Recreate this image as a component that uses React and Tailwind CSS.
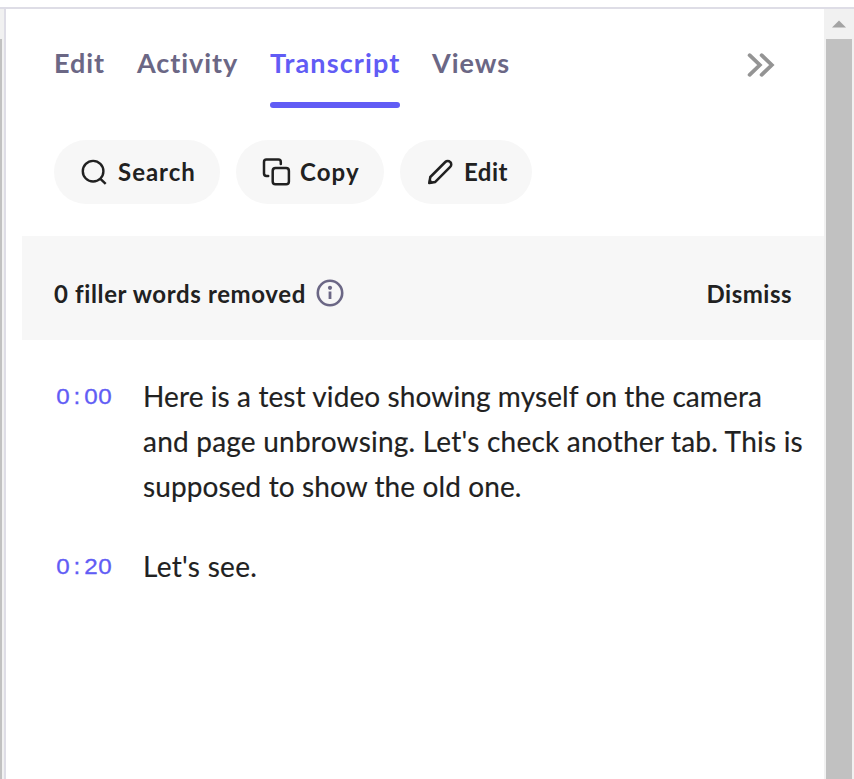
import React from "react";

function Tab({ label, active = false, className = "" }) {
  return (
    <button
      className={`flex h-[66px] flex-col justify-between whitespace-nowrap text-left text-[27px] font-bold leading-[42px] ${
        active ? "text-[#615cf5]" : "text-[#6b6785]"
      } ${className}`}
    >
      <span>{label}</span>
      {active && <span className="block h-[6px] w-full rounded-full bg-[#615cf5]" />}
    </button>
  );
}

function SearchIcon() {
  return (
    <svg className="h-[32px] w-[32px] shrink-0" viewBox="0 0 32 32" fill="none" stroke="#212121" strokeWidth="2.4">
      <circle cx="15.1" cy="15.2" r="10.3" />
      <path d="M22.4 22.8l5.3 5.1" />
    </svg>
  );
}

function CopyIcon() {
  return (
    <svg className="h-[32px] w-[32px] shrink-0" viewBox="0 0 32 32" fill="none" stroke="#212121" strokeWidth="2.5" strokeLinecap="round" strokeLinejoin="round">
      <path d="M8.2 19.9H6.4a2.4 2.4 0 0 1-2.4-2.4V5.9a2.4 2.4 0 0 1 2.4-2.4h12a2.4 2.4 0 0 1 2.4 2.4V8.1" />
      <rect x="12.7" y="12.1" width="16.2" height="16.2" rx="2.8" />
    </svg>
  );
}

function PencilIcon() {
  return (
    <svg className="h-[32px] w-[32px] shrink-0" viewBox="0 0 32 32" fill="none" stroke="#212121" strokeWidth="2.5" strokeLinejoin="round">
      <path d="M5.3 27.1l1-6.1L21.3 6a3.4 3.4 0 0 1 4.9 0a3.4 3.4 0 0 1 0 4.9L11.3 25.9Z" />
      <path d="M4.8 27.6l.7-4.4l3.5 3.4Z" fill="#212121" strokeWidth="1" />
    </svg>
  );
}

function Pill({ icon, label, className, textClass }) {
  return (
    <button className={`flex h-16 items-center whitespace-nowrap rounded-full bg-[#f7f7f7] text-[24px] font-bold text-[#212121] ${className}`}>
      {icon}
      <span className={textClass}>{label}</span>
    </button>
  );
}

function Stamp({ chars }) {
  return (
    <div className="flex h-[45px] w-[89px] shrink-0 items-center pl-[2px] font-['Liberation_Sans',sans-serif] text-[22px] text-[#615cf5] [-webkit-text-stroke:0.3px_#615cf5]">
      {chars.split("").map((c, i) => (
        <span key={i} className="w-[13.9px] scale-x-110 text-center">{c}</span>
      ))}
    </div>
  );
}

export default function App() {
  return (
    <div className="flex h-[779px] w-[854px] flex-col overflow-hidden bg-white font-['Lato',sans-serif]">
      <div className="h-[9px] shrink-0 border-b-2 border-[#dedde6]" />
      <div className="flex min-h-0 flex-1">
        <div className="w-[4px] bg-[#f1f1f1] pt-[30px]">
          <div className="h-full w-[2px] bg-[#c1c1c1]" />
        </div>
        <main className="w-[820px] border-l-2 border-[#dedde6]">
          <nav className="flex h-[131px] items-start pl-[48px] pr-[49px] pt-[33px]">
            <Tab label="Edit" className="w-[83px] tracking-[0.9px]" />
            <Tab label="Activity" className="w-[133px] tracking-[0.95px]" />
            <Tab label="Transcript" active className="w-[130px] tracking-[1.1px]" />
            <Tab label="Views" className="ml-[32px] w-[80px] tracking-[1px]" />
            <svg className="ml-auto mt-[10px] h-[26px] w-[28px]" viewBox="0 0 28 26" fill="none" stroke="#949494" strokeWidth="3.8" strokeLinecap="round" strokeLinejoin="miter">
              <path d="M2.6 3.2L12.8 13L2.6 22.8" />
              <path d="M14.6 3.2L24.8 13L14.6 22.8" />
            </svg>
          </nav>
          <div className="flex gap-4 pl-[48px]">
            <Pill icon={<SearchIcon />} label="Search" className="w-[166px] pl-[24px]" textClass="pl-[8px] tracking-[1px]" />
            <Pill icon={<CopyIcon />} label="Copy" className="w-[148px] pl-[24px]" textClass="pl-[8px] tracking-[1.1px]" />
            <Pill icon={<PencilIcon />} label="Edit" className="w-[132px] pl-[24px]" textClass="pl-[8px] tracking-[0.5px]" />
          </div>
          <section className="ml-4 mt-8 flex h-[104px] items-center bg-[#f7f7f7] pl-8 pr-8 pt-[10px] text-[24px] font-bold text-[#212121]">
            <span className="w-[262px] whitespace-nowrap pt-[2px] tracking-[0.63px]">0 filler words removed</span>
            <svg className="h-[28px] w-[28px]" viewBox="0 0 28 28" fill="none">
              <circle cx="14" cy="14" r="12.2" stroke="#6b6785" strokeWidth="2.6" />
              <circle cx="14" cy="8.8" r="2.1" fill="#6b6785" />
              <path d="M14 12.5V20" stroke="#6b6785" strokeWidth="2.8" />
            </svg>
            <button className="ml-auto pt-[2px] tracking-[0.5px]">Dismiss</button>
          </section>
          <div className="flex flex-col gap-[35px] pl-[48px] pt-[34px] text-[28px] leading-[45px] text-[#212121] [-webkit-text-stroke:0.15px_#212121]">
            <div className="flex">
              <Stamp chars="0:00" />
              <p className="whitespace-nowrap">
                <span className="tracking-[0.1px]">Here is a test video showing myself on the camera</span><br />
                <span className="tracking-[0.22px]">and page unbrowsing. Let's check another tab. This is</span><br />
                <span className="tracking-[0.1px]">supposed to show the old one.</span>
              </p>
            </div>
            <div className="flex">
              <Stamp chars="0:20" />
              <p className="whitespace-nowrap tracking-[0.3px]">Let's see.</p>
            </div>
          </div>
        </main>
        <aside className="flex w-[30px] flex-col items-center bg-[#f1f1f1]">
          <div className="flex h-[30px] items-center justify-center">
            <svg className="h-[8px] w-[14px]" viewBox="0 0 14 8"><path d="M7 0.5L14 7.5H0Z" fill="#a3a3a3" /></svg>
          </div>
          <div className="w-[26px] flex-1 bg-[#c1c1c1]" />
        </aside>
      </div>
    </div>
  );
}
